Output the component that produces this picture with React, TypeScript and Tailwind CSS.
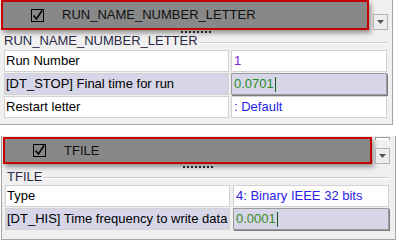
import React from "react";

function CheckIcon() {
  return (
    <svg width="13" height="13" viewBox="0 0 13 13" className="shrink-0">
      <rect x="0.5" y="0.5" width="12" height="12" fill="none" stroke="#000" strokeWidth="1" />
      <path d="M2.5 6.5 L5.5 10 L11 1.5" fill="none" stroke="#000" strokeWidth="1.6" />
    </svg>
  );
}

function DropButton() {
  return (
    <div className="flex h-[16px] w-[15px] items-center justify-center border border-[#b4b4b4] bg-[#ececec]">
      <svg width="7" height="4" viewBox="0 0 7 4">
        <path d="M0 0 H7 L3.5 4 Z" fill="#555" />
      </svg>
    </div>
  );
}

function Grip() {
  return (
    <div className="flex gap-[2px]">
      {[0, 1, 2, 3, 4, 5, 6, 7].map((i) => (
        <span key={i} className="h-[2px] w-[2px] bg-[#222]" />
      ))}
    </div>
  );
}

function Header({ title, h, w }: { title: string; h: string; w: string }) {
  return (
    <div
      className={`${h} ${w} flex items-center border-2 border-[#c40000] bg-[#888888] pl-[28px] shadow-[2px_3px_5px_rgba(0,0,0,0.4)]`}
    >
      <CheckIcon />
      <span className="ml-[18px] text-[13px] text-[#111]">{title}</span>
    </div>
  );
}

function Legend({ title, lineTop, pl }: { title: string; lineTop: string; pl: string }) {
  return (
    <div className={`flex h-[16px] items-start ${pl} pr-[5px]`}>
      <span className="leading-[16px] text-[#2a2a44]">{title}</span>
      <div className={`${lineTop} ml-[2px] h-[2px] flex-1 border-t border-b border-t-[#cfcfcf] border-b-white`} />
    </div>
  );
}

type Row = { label: string; value: string; color: string; active?: boolean };

function Rows({ rows, pl, gap }: { rows: Row[]; pl: string; gap: string }) {
  return (
    <div className={`flex flex-col gap-[1px] ${pl}`}>
      {rows.map((r) => (
        <div key={r.label} className={`flex h-[22px] ${gap}`}>
          <div
            className={`flex w-[225px] items-center border border-[#d2d2d2] pl-[1px] text-black ${
              r.active ? "bg-[#d6d6e8]" : "bg-white"
            }`}
          >
            {r.label}
          </div>
          {r.active ? (
            <div
              className="flex w-[156px] items-center border border-[#9c9c9c] bg-[#d6d6e8] pl-[2px] shadow-[1px_1px_0_#7c7c7c]"
              style={{ color: r.color }}
            >
              {r.value}
              <span className="ml-[1px] h-[15px] w-[1px] bg-[#1c5a1c]" />
            </div>
          ) : (
            <div
              className="flex w-[156px] items-center border border-[#d2d2d2] bg-white pl-[2px]"
              style={{ color: r.color }}
            >
              {r.value}
            </div>
          )}
        </div>
      ))}
    </div>
  );
}

export default function App() {
  return (
    <div className="flex h-[243px] w-[399px] flex-col overflow-hidden bg-white font-['Liberation_Sans',Arial,sans-serif] text-[13px]">
      <div className="h-[125px] w-[393px] shrink-0 border-r border-b border-[#a4a4a4] bg-[#f0f0f0]">
        <div className="flex h-[30px] items-end pl-[1px]">
          <Header title="RUN_NAME_NUMBER_LETTER" h="h-[30px]" w="w-[368px]" />
          <div className="ml-[4px]">
            <DropButton />
          </div>
        </div>
        <div className="mt-[1px] h-[2px] pl-[181px]">
          <Grip />
        </div>
        <Legend title="RUN_NAME_NUMBER_LETTER" lineTop="mt-[9px]" pl="pl-[4px]" />
        <div className="mt-[1px]">
          <Rows
            pl="pl-[4px]"
            gap="gap-[2px]"
            rows={[
              { label: "Run Number", value: "1", color: "#7a2ad6" },
              { label: "[DT_STOP] Final time for run", value: "0.0701", color: "#2a8a2a", active: true },
              { label: "Restart letter", value: ": Default", color: "#1f1fe6" },
            ]}
          />
        </div>
      </div>

      <div className="h-[11px] shrink-0" />

      <div className="ml-[1px] h-[104px] w-[395px] shrink-0 border-x border-b border-[#a4a4a4] bg-[#f0f0f0]">
        <div className="mt-[1px] flex h-[27px] pl-[1px]">
          <Header title="TFILE" h="h-[27px]" w="w-[369px]" />
          <div className="ml-[3px] flex h-[27px] w-[15px] flex-col justify-between">
            <div className="h-[3px] border-x border-t border-[#9a9a9a] bg-white" />
            <DropButton />
          </div>
        </div>
        <div className="mt-[2px] h-[2px] pl-[181px]">
          <Grip />
        </div>
        <div className="mt-[1px]">
          <Legend title="TFILE" lineTop="mt-[8px]" pl="pl-[5px]" />
        </div>
        <Rows
          pl="pl-[3px]"
          gap="gap-[3px]"
          rows={[
            { label: "Type", value: "4: Binary IEEE 32 bits", color: "#2a22e8" },
            { label: "[DT_HIS] Time frequency to write data", value: "0.0001", color: "#3c8a22", active: true },
          ]}
        />
      </div>
    </div>
  );
}
